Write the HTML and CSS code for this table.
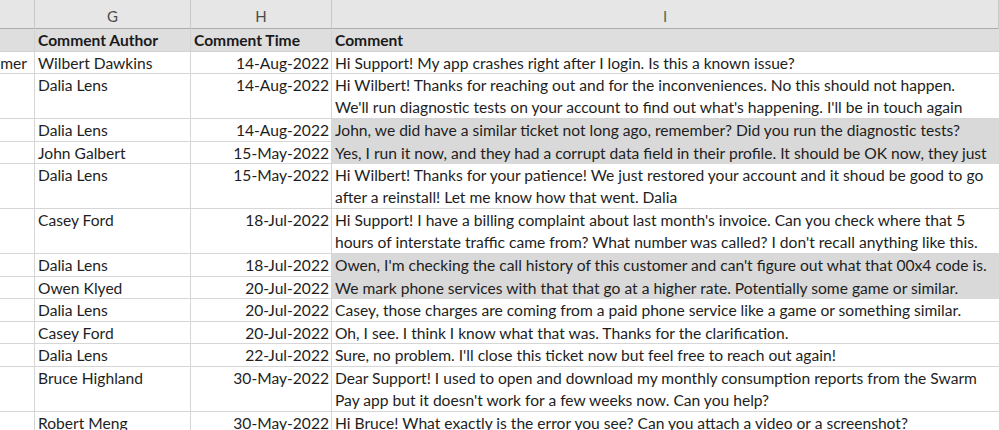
FILE: index.html
```html
<!DOCTYPE html>
<html>
<head>
<meta charset="utf-8">
<link rel="stylesheet" href="styles.css">
</head>
<body>
<div class="sheet">
  <div class="row colhead">
    <div class="ch"></div>
    <div class="ch">G</div>
    <div class="ch">H</div>
    <div class="ch sel">I</div>
  </div>
  <div class="row r1 head">
    <div class="c"></div>
    <div class="c">Comment Author</div>
    <div class="c">Comment Time</div>
    <div class="c">Comment</div>
  </div>
  <div class="row r1">
    <div class="c f"><span>Customer</span></div>
    <div class="c">Wilbert Dawkins</div>
    <div class="c d">14-Aug-2022</div>
    <div class="c">Hi Support! My app crashes right after I login. Is this a known issue?</div>
  </div>
  <div class="row r2">
    <div class="c"></div>
    <div class="c">Dalia Lens</div>
    <div class="c d">14-Aug-2022</div>
    <div class="c">Hi Wilbert! Thanks for reaching out and for the inconveniences. No this should not happen.<br>We'll run diagnostic tests on your account to find out what's happening. I'll be in touch again</div>
  </div>
  <div class="row r1">
    <div class="c"></div>
    <div class="c">Dalia Lens</div>
    <div class="c d">14-Aug-2022</div>
    <div class="c hl">John, we did have a similar ticket not long ago, remember? Did you run the diagnostic tests?</div>
  </div>
  <div class="row r1">
    <div class="c"></div>
    <div class="c">John Galbert</div>
    <div class="c d">15-May-2022</div>
    <div class="c hl">Yes, I run it now, and they had a corrupt data field in their profile. It should be OK now, they just</div>
  </div>
  <div class="row r2">
    <div class="c"></div>
    <div class="c">Dalia Lens</div>
    <div class="c d">15-May-2022</div>
    <div class="c">Hi Wilbert! Thanks for your patience! We just restored your account and it shoud be good to go<br>after a reinstall! Let me know how that went. Dalia</div>
  </div>
  <div class="row r2">
    <div class="c"></div>
    <div class="c">Casey Ford</div>
    <div class="c d">18-Jul-2022</div>
    <div class="c">Hi Support! I have a billing complaint about last month's invoice. Can you check where that 5<br>hours of interstate traffic came from? What number was called? I don't recall anything like this.</div>
  </div>
  <div class="row r1">
    <div class="c"></div>
    <div class="c">Dalia Lens</div>
    <div class="c d">18-Jul-2022</div>
    <div class="c hl">Owen, I'm checking the call history of this customer and can't figure out what that 00x4 code is.</div>
  </div>
  <div class="row r1">
    <div class="c"></div>
    <div class="c">Owen Klyed</div>
    <div class="c d">20-Jul-2022</div>
    <div class="c hl">We mark phone services with that that go at a higher rate. Potentially some game or similar.</div>
  </div>
  <div class="row r1">
    <div class="c"></div>
    <div class="c">Dalia Lens</div>
    <div class="c d">20-Jul-2022</div>
    <div class="c">Casey, those charges are coming from a paid phone service like a game or something similar.</div>
  </div>
  <div class="row r1">
    <div class="c"></div>
    <div class="c">Casey Ford</div>
    <div class="c d">20-Jul-2022</div>
    <div class="c">Oh, I see. I think I know what that was. Thanks for the clarification.</div>
  </div>
  <div class="row r1">
    <div class="c"></div>
    <div class="c">Dalia Lens</div>
    <div class="c d">22-Jul-2022</div>
    <div class="c">Sure, no problem. I'll close this ticket now but feel free to reach out again!</div>
  </div>
  <div class="row r2">
    <div class="c"></div>
    <div class="c">Bruce Highland</div>
    <div class="c d">30-May-2022</div>
    <div class="c">Dear Support! I used to open and download my monthly consumption reports from the Swarm<br>Pay app but it doesn't work for a few weeks now. Can you help?</div>
  </div>
  <div class="row r1">
    <div class="c"></div>
    <div class="c">Robert Meng</div>
    <div class="c d">30-May-2022</div>
    <div class="c">Hi Bruce! What exactly is the error you see? Can you attach a video or a screenshot?</div>
  </div>
</div>
</body>
</html>
```
FILE: styles.css
```css
html, body {
  margin: 0;
  padding: 0;
  background: #ffffff;
}
body {
  width: 999px;
  height: 430px;
  overflow: hidden;
  font-family: "Lato", "Liberation Sans", sans-serif;
  font-size: 15.6px;
  color: #1e1e1e;
}
.sheet {
  display: flex;
  flex-direction: column;
}
.row {
  display: grid;
  grid-template-columns: 35px 156px 141px 667px;
}
.colhead {
  height: 29px;
  background: #e6e6e6;
  border-bottom: 1px solid #acacac;
  box-sizing: border-box;
}
.ch {
  box-sizing: border-box;
  border-right: 1px solid #c9c9c9;
  text-align: center;
  line-height: 28px;
  padding-top: 2px;
  font-size: 15px;
  color: #4c4c4c;
}
.ch.sel {
  color: #44704f;
}
.r1 { height: 22.5px; }
.r2 { height: 45px; }
.c {
  box-sizing: border-box;
  border-right: 1px solid #d6d6d6;
  border-bottom: 1px solid #d6d6d6;
  padding: 0 0 0 3px;
  line-height: 22px;
  white-space: nowrap;
  overflow: hidden;
}
.c:last-child {
  border-right: none;
}
.head {
  background: #dedede;
}
.head .c {
  font-weight: bold;
  color: #1a1a1a;
  border-right-color: #d2d2d2;
  border-bottom-color: #d2d2d2;
}
.d {
  text-align: right;
  padding: 0 2px 0 0;
}
.f {
  display: flex;
  justify-content: flex-end;
  padding-right: 7px;
}
.hl {
  background: #d9d9d9;
  border-bottom-color: #d9d9d9;
}
```
